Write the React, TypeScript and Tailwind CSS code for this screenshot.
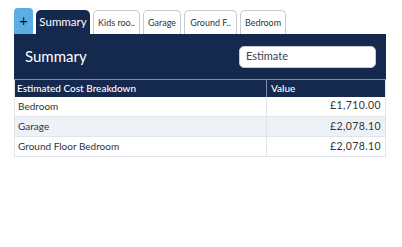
const rows = [
  { name: 'Bedroom', value: '£1,710.00' },
  { name: 'Garage', value: '£2,078.10' },
  { name: 'Ground Floor Bedroom', value: '£2,078.10' },
];

const tabs = [
  { label: 'Kids roo..', w: 'w-[47px]' },
  { label: 'Garage', w: 'w-[38px]' },
  { label: 'Ground F..', w: 'w-[53px]' },
  { label: 'Bedroom', w: 'w-[46px]' },
];

export default function App() {
  return (
    <div className="w-[402px] h-[247px] bg-white font-['Lato',sans-serif] pl-[14px] pt-[8px]">
      <div className="w-[372px]">
        {/* tab strip */}
        <div className="flex items-end h-[26px] gap-[3px]">
          <div className="w-[19px] h-[26px] bg-[#5aaee3] rounded-t-[4px] flex items-center justify-center text-[#111] text-[15px] leading-none pb-[2px]">
            +
          </div>
          <div className="w-[54px] h-[24px] bg-[#15284e] rounded-t-[5px] flex items-center justify-center text-white text-[11.5px]">
            Summary
          </div>
          {tabs.map(t => (
            <div
              key={t.label}
              className={`${t.w} h-[24px] border border-b-0 border-[#c6cbd3] rounded-t-[5px] bg-white flex items-center justify-center text-[9px] text-[#333]`}
            >
              {t.label}
            </div>
          ))}
        </div>

        {/* panel header */}
        <div className="bg-[#15284e] h-[45px] flex items-center justify-between pl-[11px] pr-[10px]">
          <span className="text-white text-[15px]">Summary</span>
          <div className="w-[137px] h-[22px] bg-white rounded-[5px] border border-[#c6cbd3] flex items-center px-[6px] text-[11px] text-[#3b4150]">
            Estimate
          </div>
        </div>

        {/* table */}
        <table className="w-full border-collapse text-[10px] border-x border-[#e1e4e8]">
          <thead>
            <tr className="bg-[#15284e] text-white h-[17px] border-t border-[#7d8fae]">
              <th className="text-left font-medium pl-[2px] py-0">Estimated Cost Breakdown</th>
              <th className="text-left font-medium pl-[4px] w-[119px] border-l border-[#7d8fae] py-0">Value</th>
            </tr>
          </thead>
          <tbody className="text-[#333]">
            {rows.map((r, i) => (
              <tr key={r.name} className={`h-[20px] border-b border-[#e1e4e8] ${i === 1 ? 'bg-[#eef2f7]' : 'bg-white'}`}>
                <td className="pl-[3px] py-0">{r.name}</td>
                <td className="text-right pr-[4px] border-l border-[#e1e4e8] py-0 text-[10.5px] tracking-[0.4px]">{r.value}</td>
              </tr>
            ))}
          </tbody>
        </table>
      </div>
    </div>
  );
}
